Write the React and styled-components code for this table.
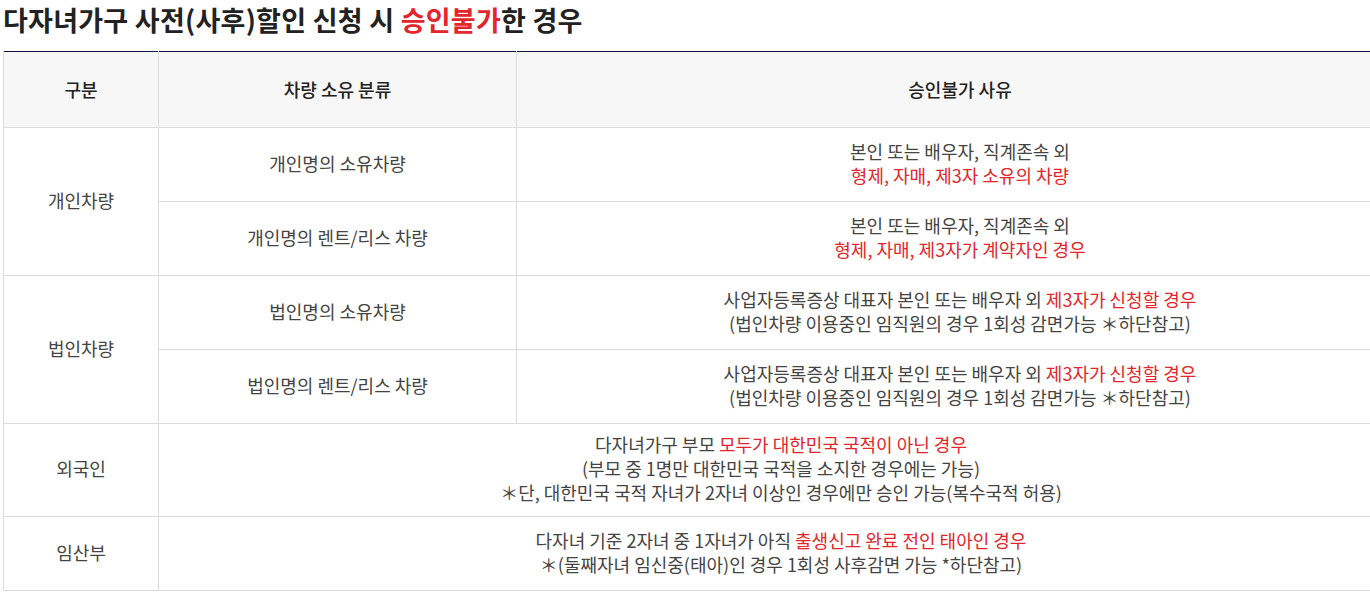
import React from "react";
import styled, { createGlobalStyle } from "styled-components";

const Global = createGlobalStyle`
  html, body { margin: 0; padding: 0; background: #fff; overflow: hidden; }
  body { font-family: "Noto Sans CJK KR", "Noto Sans", sans-serif; color: #333; }
`;

const Page = styled.div`
  padding: 0 0 0 3px;
  width: 1401px;
  overflow: hidden;
`;

const Title = styled.h2`
  margin: 0 0 11px 0;
  font-size: 27px;
  line-height: 40px;
  font-weight: 700;
  letter-spacing: 0.25px;
  color: #222;
`;

const Red = styled.span`
  color: #e4252b;
`;

const Table = styled.table`
  width: 1401px;
  border-collapse: collapse;
  border-top: 1px solid #0d0d3d;
  table-layout: fixed;
`;

const HeadRow = styled.tr`
  height: 76px;
  background: #f7f7f7;
`;

const Row = styled.tr`
  height: 74px;
`;

const HeadCell = styled.th`
  border: 1px solid #dcdcdc;
  border-top: none;
  font-size: 18px;
  font-weight: 500;
  color: #222;
  text-align: center;
  vertical-align: middle;
  padding: 0 10px 2px;
`;

const Cell = styled.td`
  border: 1px solid #dcdcdc;
  font-size: 18px;
  line-height: 24px;
  color: #444;
  text-align: center;
  vertical-align: middle;
  padding: 8px 10px 12px;
`;

const Line = styled.div``;

export default function App() {
  return (
    <Page>
      <Global />
      <Title>
        다자녀가구 사전(사후)할인 신청 시 <Red>승인불가</Red>한 경우
      </Title>
      <Table>
        <colgroup>
          <col style={{ width: 155 }} />
          <col style={{ width: 358 }} />
          <col />
        </colgroup>
        <thead>
          <HeadRow>
            <HeadCell>구분</HeadCell>
            <HeadCell>차량 소유 분류</HeadCell>
            <HeadCell>승인불가 사유</HeadCell>
          </HeadRow>
        </thead>
        <tbody>
          <Row>
            <Cell rowSpan={2}>개인차량</Cell>
            <Cell>개인명의 소유차량</Cell>
            <Cell>
              <Line>본인 또는 배우자, 직계존속 외</Line>
              <Line><Red>형제, 자매, 제3자 소유의 차량</Red></Line>
            </Cell>
          </Row>
          <Row>
            <Cell>개인명의 렌트/리스 차량</Cell>
            <Cell>
              <Line>본인 또는 배우자, 직계존속 외</Line>
              <Line><Red>형제, 자매, 제3자가 계약자인 경우</Red></Line>
            </Cell>
          </Row>
          <Row>
            <Cell rowSpan={2}>법인차량</Cell>
            <Cell>법인명의 소유차량</Cell>
            <Cell>
              <Line>사업자등록증상 대표자 본인 또는 배우자 외 <Red>제3자가 신청할 경우</Red></Line>
              <Line>(법인차량 이용중인 임직원의 경우 1회성 감면가능 ＊하단참고)</Line>
            </Cell>
          </Row>
          <Row>
            <Cell>법인명의 렌트/리스 차량</Cell>
            <Cell>
              <Line>사업자등록증상 대표자 본인 또는 배우자 외 <Red>제3자가 신청할 경우</Red></Line>
              <Line>(법인차량 이용중인 임직원의 경우 1회성 감면가능 ＊하단참고)</Line>
            </Cell>
          </Row>
          <Row>
            <Cell>외국인</Cell>
            <Cell colSpan={2}>
              <Line>다자녀가구 부모 <Red>모두가 대한민국 국적이 아닌 경우</Red></Line>
              <Line>(부모 중 1명만 대한민국 국적을 소지한 경우에는 가능)</Line>
              <Line>＊단, 대한민국 국적 자녀가 2자녀 이상인 경우에만 승인 가능(복수국적 허용)</Line>
            </Cell>
          </Row>
          <Row>
            <Cell>임산부</Cell>
            <Cell colSpan={2}>
              <Line>다자녀 기준 2자녀 중 1자녀가 아직 <Red>출생신고 완료 전인 태아인 경우</Red></Line>
              <Line>＊(둘째자녀 임신중(태아)인 경우 1회성 사후감면 가능 *하단참고)</Line>
            </Cell>
          </Row>
        </tbody>
      </Table>
    </Page>
  );
}
